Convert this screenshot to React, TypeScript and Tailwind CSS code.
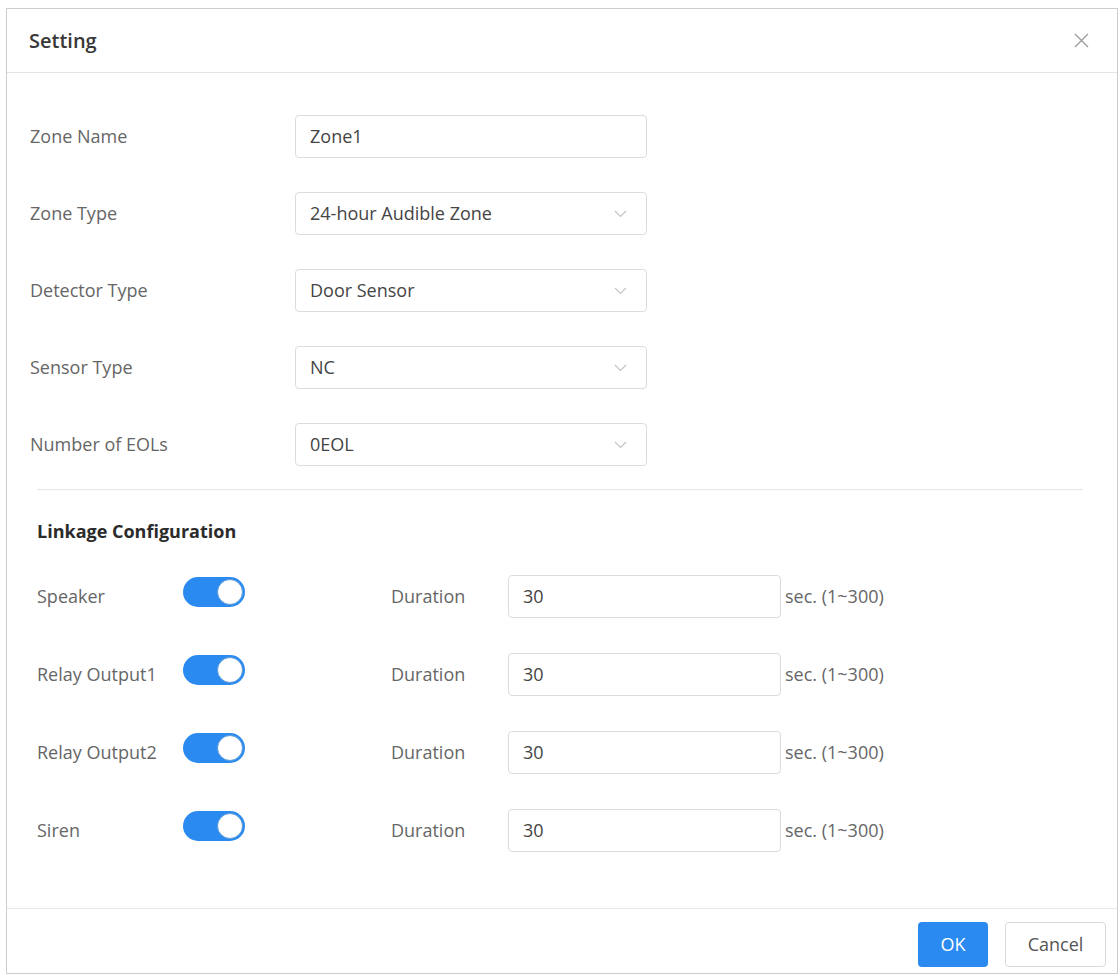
import React from "react";

const fields = [
  { label: "Zone Name", value: "Zone1", select: false },
  { label: "Zone Type", value: "24-hour Audible Zone", select: true },
  { label: "Detector Type", value: "Door Sensor", select: true },
  { label: "Sensor Type", value: "NC", select: true },
  { label: "Number of EOLs", value: "0EOL", select: true },
];

const linkages = ["Speaker", "Relay Output1", "Relay Output2", "Siren"];

function Chevron() {
  return (
    <svg width="13" height="8" viewBox="0 0 13 8" fill="none" className="shrink-0">
      <path d="M1 1l5.5 5.5L12 1" stroke="#c4c4c4" strokeWidth="1.2" />
    </svg>
  );
}

function Toggle() {
  return (
    <div className="self-start mt-[2px] flex h-[30px] w-[62px] items-center justify-end rounded-full bg-[#2b8af0] p-[2px]">
      <div className="h-[26px] w-[26px] rounded-full border border-[#5a9bd8] bg-white" />
    </div>
  );
}

export default function App() {
  return (
    <div className="h-[975px] w-[1120px] overflow-hidden bg-white pl-[6px] pt-[8px] font-['Open_Sans',sans-serif]">
      <div className="flex h-[966px] w-[1112px] flex-col border border-[#cdcdcd] bg-white">
        {/* header */}
        <div className="flex h-[64px] shrink-0 items-center justify-between border-b border-[#e4e4e4] pl-[22px] pr-[28px]">
          <div className="text-[20px] font-semibold text-[#383838]">Setting</div>
          <svg width="15" height="15" viewBox="0 0 15 15" fill="none">
            <path d="M1 1l13 13M14 1L1 14" stroke="#9a9a9a" strokeWidth="1.3" />
          </svg>
        </div>

        {/* body */}
        <div className="flex-1 pl-[23px] pt-[42px]">
          <div className="flex flex-col gap-[34px]">
            {fields.map((f) => (
              <div key={f.label} className="flex h-[43px] items-center">
                <div className="w-[265px] text-[18px] text-[#666]">{f.label}</div>
                <div className="flex h-[43px] w-[352px] items-center justify-between rounded-[4px] border border-[#dcdcdc] pl-[14px] pr-[19px] text-[18px] text-[#444]">
                  <span>{f.value}</span>
                  {f.select ? <Chevron /> : null}
                </div>
              </div>
            ))}
          </div>

          <div className="ml-[7px] mr-[34px] mt-[23px] h-px bg-[#e6e6e6]" />

          <div className="ml-[7px] mt-[29px] text-[18px] font-bold leading-[24px] text-[#2b2b2b]">
            Linkage Configuration
          </div>

          <div className="ml-[7px] mt-[32px] flex flex-col gap-[35px]">
            {linkages.map((name) => (
              <div key={name} className="flex h-[43px] items-center">
                <div className="w-[146px] text-[18px] text-[#666]">{name}</div>
                <Toggle />
                <div className="ml-[146px] w-[117px] text-[18px] text-[#666]">Duration</div>
                <div className="flex h-[43px] w-[273px] items-center rounded-[4px] border border-[#dcdcdc] pl-[14px] text-[18px] text-[#444]">
                  30
                </div>
                <div className="ml-[4px] text-[18px] text-[#666]">sec. (1~300)</div>
              </div>
            ))}
          </div>
        </div>

        {/* footer */}
        <div className="flex h-[65px] shrink-0 items-start justify-end gap-[17px] border-t border-[#e8e8e8] pr-[11px] pt-[13px]">
          <button
            type="button"
            className="h-[45px] w-[70px] rounded-[4px] bg-[#2b8af0] text-[18px] text-white"
          >
            OK
          </button>
          <button
            type="button"
            className="h-[45px] w-[101px] rounded-[4px] border border-[#d9d9d9] bg-white text-[18px] text-[#555]"
          >
            Cancel
          </button>
        </div>
      </div>
    </div>
  );
}
